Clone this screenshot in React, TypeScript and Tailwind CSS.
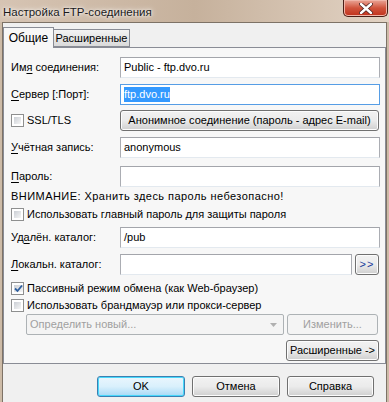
import React from 'react'

const font = { fontFamily: '"Liberation Sans", "DejaVu Sans", sans-serif' }

function U({ children }: { children: React.ReactNode }) {
  return <span className="underline underline-offset-[2px]">{children}</span>
}

function Box({ checked }: { checked?: boolean }) {
  return (
    <span className="w-[13px] h-[13px] shrink-0 border border-[#8e8f8f] bg-white p-[2px] flex">
      <span className="flex-1 bg-gradient-to-br from-[#cbcfd5] to-[#f6f6f6] flex items-center justify-center">
        {checked && (
          <svg width="9" height="9" viewBox="0 0 9 9">
            <path d="M1 4.5 L3.5 7 L8 1.5" stroke="#2d5e9e" strokeWidth="1.8" fill="none" />
          </svg>
        )}
      </span>
    </span>
  )
}

function Input({ value, w = 'w-[260px]', focus }: { value?: string; w?: string; focus?: boolean }) {
  return (
    <div className={`${w} h-[21px] bg-white border flex items-center px-[3px] whitespace-nowrap ${focus ? 'border-[#569de5]' : 'border-[#abadb3] border-t-[#a3a5ab] border-b-[#e3e9ef]'}`}>
      {focus ? <span className="bg-[#3399ff] text-white leading-[15px]">{value}</span> : <span>{value}</span>}
    </div>
  )
}

function Btn({ children, className = '', def, disabled }: { children: React.ReactNode; className?: string; def?: boolean; disabled?: boolean }) {
  const look = disabled
    ? 'border-[#adb2b5] bg-[#f4f4f4] text-[#a0a0a0]'
    : def
      ? 'border-[#3c7fb1] bg-gradient-to-b from-[#eaf6fd] via-[#d9f0fc] to-[#a7d9f5] shadow-[inset_0_0_0_1px_#48d8fb]'
      : 'border-[#707070] bg-gradient-to-b from-[#f2f2f2] via-[#ebebeb] to-[#cfcfcf] shadow-[inset_0_0_0_1px_#fcfcfc]'
  return (
    <div className={`h-[21px] rounded-[3px] border flex items-center justify-center whitespace-nowrap ${look} ${className}`}>{children}</div>
  )
}

function Row({ label, children, mt }: { label: React.ReactNode; children: React.ReactNode; mt: string }) {
  return (
    <div className={`flex items-center ${mt}`}>
      <div className="w-[109px] shrink-0 whitespace-nowrap">{label}</div>
      {children}
    </div>
  )
}

export default function App() {
  return (
    <div className="w-[389px] h-[402px] overflow-hidden bg-[#cdbba7] text-[11px] text-black flex flex-col" style={font}>
      {/* title bar */}
      <div className="h-[22px] shrink-0 flex items-start bg-gradient-to-r from-[#d6c4b3] via-[#c6b19c] to-[#e2d3c4]">
        <div className="pl-[3px] pt-[4px] text-[11.5px] text-[#1a1a1a] [text-shadow:0_0_6px_#fff,0_0_3px_#fff]">Настройка FTP-соединения</div>
        <div className="ml-auto mr-[1px] w-[45px] h-[17px] rounded-b-[5px] border border-t-0 border-[#4a1f17] bg-gradient-to-b from-[#e9a597] via-[#d0533c] to-[#c0301a] shadow-[inset_0_0_0_1px_#f0b5a8] flex items-center justify-center">
          <svg width="14" height="11" viewBox="0 0 14 11">
            <path d="M2 1 L12 10 M12 1 L2 10" stroke="#4a2020" strokeWidth="4" strokeLinecap="round" />
            <path d="M2 1 L12 10 M12 1 L2 10" stroke="#fff" strokeWidth="2.4" strokeLinecap="round" />
          </svg>
        </div>
      </div>

      {/* client area */}
      <div className="flex-1 ml-[2px] mr-[2px] bg-[#f0f0f0] border-l border-t border-r border-[#7d7266] flex flex-col">
        {/* tabs */}
        <div className="h-[24px] pt-[3px] flex items-end">
          <div className="h-[21px] w-[51px] bg-[#f7f7f7] border border-b-0 border-[#898c95] flex items-center justify-center relative z-10 -mb-[1px] text-[12px]">Общие</div>
          <div className="h-[18px] w-[77px] -ml-[1px] border border-[#898c95] bg-gradient-to-b from-[#f3f3f3] to-[#dadada] flex items-center justify-center">Расширенные</div>
        </div>
        <div className="h-[317px] bg-[#f7f7f7] border border-[#898c95] pl-[7px] pt-[9px] flex flex-col">
          <Row label={<>Им<U>я</U> соединения:</>} mt="mt-0">
            <Input value="Public - ftp.dvo.ru" />
          </Row>
          <Row label={<><U>С</U>ервер [:Порт]:</>} mt="mt-[6px]">
            <Input value="ftp.dvo.ru" focus />
          </Row>
          <Row label={<span className="flex items-center gap-[3px]"><Box /><span>SSL/TLS</span></span>} mt="mt-[5px]">
            <Btn className="w-[259px]">Анонимное соединение (пароль - адрес E-mail)</Btn>
          </Row>
          <Row label={<><U>У</U>чётная запись:</>} mt="mt-[6px]">
            <Input value="anonymous" />
          </Row>
          <Row label={<><U>П</U>ароль:</>} mt="mt-[8px]">
            <Input />
          </Row>
          <div className="mt-[2px] h-[15px] leading-[15px] whitespace-nowrap tracking-[0.45px]">ВНИМАНИЕ: Хранить здесь пароль небезопасно!</div>
          <div className="mt-[3px] flex items-center gap-[3px] h-[15px] whitespace-nowrap"><Box /><span>Использовать главный пароль для защиты пароля</span></div>
          <Row label={<>Уд<U>а</U>лён. каталог:</>} mt="mt-[5px]">
            <Input value="/pub" />
          </Row>
          <Row label={<><U>Л</U>окальн. каталог:</>} mt="mt-[6px]">
            <Input w="w-[232px]" />
            <Btn className="w-[24px] ml-[3px] text-[#1a3a9a] tracking-[1px]">&gt;&gt;</Btn>
          </Row>
          <div className="mt-[6px] flex items-center gap-[3px] h-[15px] whitespace-nowrap"><Box checked /><span>Пассивный режим обмена (как Web-браузер)</span></div>
          <div className="mt-[2px] flex items-center gap-[3px] h-[15px] whitespace-nowrap"><Box /><span>Использовать брандмауэр или прокси-сервер</span></div>
          <div className="mt-[1px] pl-[15px] flex items-center">
            <div className="w-[258px] h-[21px] rounded-[2px] border border-[#adb2b5] bg-[#f4f4f4] text-[#a0a0a0] flex items-center pl-[3px] pr-[6px]">
              <span>Определить новый...</span>
              <svg className="ml-auto" width="7" height="4" viewBox="0 0 7 4"><path d="M0 0 H7 L3.5 4 Z" fill="#b0b0b0" /></svg>
            </div>
            <Btn disabled className="w-[91px] ml-[3px]">Изменить...</Btn>
          </div>
          <div className="mt-[5px] flex justify-end pr-[6px]">
            <Btn className="w-[93px]">Расширенные -&gt;</Btn>
          </div>
        </div>
        {/* bottom buttons */}
        <div className="flex mt-[12px] pl-[94px] gap-[7px]">
          <Btn def className="w-[88px]">OK</Btn>
          <Btn className="w-[88px]">Отмена</Btn>
          <Btn className="w-[87px]">Справка</Btn>
        </div>
      </div>
    </div>
  )
}
